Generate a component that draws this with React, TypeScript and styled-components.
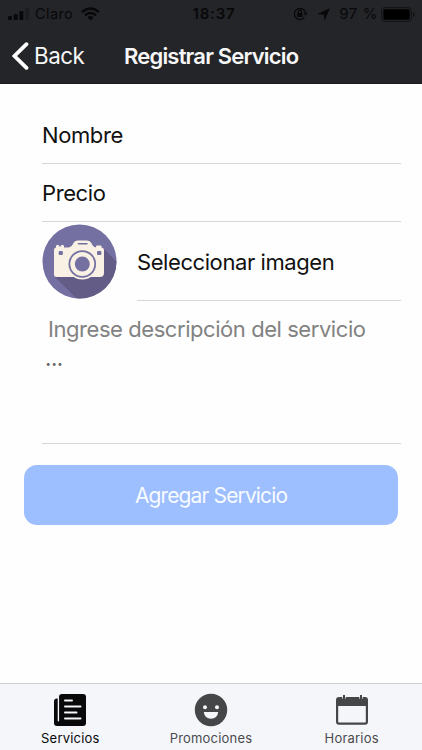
import React from 'react';
import styled, { createGlobalStyle } from 'styled-components';

const GlobalStyle = createGlobalStyle`
  * { box-sizing: border-box; }
  body { margin: 0; background: #fff; font-family: Inter, "Liberation Sans", sans-serif; }
  svg { display: block; flex: none; }
`;

const Screen = styled.div`
  width: 422px;
  height: 750px;
  display: flex;
  flex-direction: column;
  background: #fefefe;
  overflow: hidden;
`;

const Header = styled.header`
  height: 84px;
  flex: none;
  background: #242528;
  border-bottom: 1px solid #1a1a1d;
`;

const StatusBar = styled.div`
  height: 28px;
  display: grid;
  grid-template-columns: 1fr auto 1fr;
  align-items: center;
  padding: 0 7px 0 8px;
  color: #08080a;
  font-size: 14.5px;
  line-height: 28px;
`;

const StatusGroup = styled.div<{ $end?: boolean }>`
  display: flex;
  align-items: center;
  justify-content: ${(p) => (p.$end ? 'flex-end' : 'flex-start')};
`;

const Carrier = styled.span`
  margin: 0 8px 0 5px;
  letter-spacing: 0.4px;
`;

const Clock = styled.span`
  font-weight: 600;
  font-size: 15px;
  letter-spacing: 0.8px;
  padding-left: 5px;
`;

const Percent = styled.span`
  margin: 0 3px 0 9px;
  font-size: 15px;
  letter-spacing: 0.6px;
  white-space: nowrap;
`;

const StatusIcons = styled.div`
  display: flex;
  align-items: center;
  gap: 9px;
`;

const NavBar = styled.div`
  height: 55px;
  display: flex;
  align-items: center;
  padding-left: 12px;
  color: #f7f7f8;
`;

const BackButton = styled.button`
  display: flex;
  align-items: center;
  gap: 5px;
  width: 112px;
  padding: 0;
  border: 0;
  background: none;
  color: inherit;
  font: 400 22.4px/30px Inter, sans-serif;
  letter-spacing: -0.5px;
`;

const Title = styled.h1`
  margin: 0;
  font-size: 22px;
  line-height: 30px;
  font-weight: 600;
  letter-spacing: -0.81px;
  white-space: nowrap;
`;

const Form = styled.main`
  flex: 1;
  display: flex;
  flex-direction: column;
  padding: 22px 21px 0 42px;
`;

const Field = styled.div`
  height: 58px;
  flex: none;
  display: flex;
  align-items: center;
  border-bottom: 1px solid #d6d6d8;
  color: #111;
  font-size: 22px;
  letter-spacing: -0.4px;
`;

const ImageRow = styled.div`
  height: 79px;
  flex: none;
  display: flex;
  gap: 20px;
`;

const Avatar = styled.div`
  width: 75px;
  padding-top: 2px;
`;

const ImageLabel = styled.div`
  flex: 1;
  display: flex;
  align-items: center;
  border-bottom: 1px solid #d6d6d8;
  color: #111;
  font-size: 22px;
  letter-spacing: -0.42px;
  padding-top: 1px;
`;

const Description = styled.div`
  height: 143px;
  flex: none;
  border-bottom: 1px solid #d6d6d8;
  padding: 13px 0 0 6px;
  color: #828282;
  font-size: 22px;
  line-height: 30px;
  letter-spacing: -0.44px;
`;

const Ellipsis = styled.div`
  margin: -1px 0 0 -3px;
  color: #666;
`;

const Submit = styled.button`
  width: 374px;
  height: 60px;
  flex: none;
  margin: 21px 0 0 -18px;
  padding: 2px 0 0;
  border: 0;
  border-radius: 13px;
  background: #9dbeff;
  color: #f8fbff;
  font: 400 21px/30px Inter, sans-serif;
  letter-spacing: -0.87px;
`;

const TabBar = styled.nav`
  height: 67px;
  flex: none;
  display: grid;
  grid-template-columns: repeat(3, 1fr);
  border-top: 1px solid #cfcfd2;
  background: #f5f6fa;
`;

const Tab = styled.div<{ $active?: boolean }>`
  display: flex;
  flex-direction: column;
  align-items: center;
  padding-top: 9px;
  color: ${(p) => (p.$active ? '#09090a' : '#4a4b4d')};
  font-size: 13px;
  line-height: 18px;
  letter-spacing: 0.2px;
`;

const TabLabel = styled.span`
  margin-top: 2px;
`;

const Signal = () => (
  <svg width="22" height="14" viewBox="0 0 22 14" fill="#08080a">
    <rect x="0" y="9" width="4" height="4" rx="1" />
    <rect x="5.7" y="7" width="4" height="6" rx="1" />
    <rect x="11.4" y="4" width="4" height="9" rx="1" />
    <rect x="17.2" y="1" width="4" height="12" rx="1" opacity="0.25" />
  </svg>
);

const Wifi = () => (
  <svg width="19" height="14" viewBox="0 0 19 14" fill="none" stroke="#08080a" strokeWidth="2.4">
    <path d="M1 5.1Q9.5-2.3 18 5.1M4 8.4Q9.5 3.6 15 8.4" />
    <path d="M6.4 10.4Q9.5 7.8 12.6 10.4L9.5 13.6Z" fill="#08080a" stroke="none" />
  </svg>
);

const RotationLock = () => (
  <svg width="15" height="14" viewBox="0 0 15 14" fill="none" stroke="#08080a" strokeWidth="1.2">
    <path d="M11.4 10.4A5.6 5.6 0 1 1 12.4 5.5" />
    <path d="M10.4 5.8h4.2l-2 3Z" fill="#08080a" stroke="none" />
    <rect x="4.1" y="6" width="5.4" height="4" rx=".5" fill="#08080a" stroke="none" />
    <path d="M5.2 6V4.8a1.6 1.6 0 0 1 3.2 0V6" />
  </svg>
);

const LocationArrow = () => (
  <svg width="13" height="13" viewBox="0 0 13 13" fill="#08080a">
    <path d="M12.8.2 7.6 12.8 6.8 6.7.2 6Z" />
  </svg>
);

const Battery = () => (
  <svg width="34" height="15" viewBox="0 0 34 15">
    <rect x=".6" y=".6" width="29.8" height="13.8" rx="3" fill="none" stroke="#111214" strokeWidth="1" />
    <rect x="2.3" y="2.3" width="26.4" height="10.4" rx="1.5" fill="#000" />
    <path d="M32 5q1.7.6 1.7 2.5T32 10Z" fill="#111214" />
  </svg>
);

const Chevron = () => (
  <svg width="17" height="28" viewBox="0 0 17 28" fill="none" stroke="#fff" strokeWidth="3.8" strokeLinecap="round">
    <path d="M14.5 2.2 2.5 14l12 11.8" />
  </svg>
);

const Camera = () => (
  <svg width="75" height="75" viewBox="0 0 75 75">
    <defs>
      <clipPath id="disc">
        <circle cx="37.5" cy="37.5" r="37" />
      </clipPath>
    </defs>
    <circle cx="37.5" cy="37.5" r="37" fill="#7570a2" />
    <path d="M12.5 52.5 61 24l30 30v60H74Z" fill="#625c87" clipPath="url(#disc)" />
    <path
      d="M14 23.5v-1.2q0-1.2 1.2-1.2h5.6q1.2 0 1.2 1.2v1.2h5q3-1 4.5-4.3 1.2-2.7 4.5-2.7h9q3.2 0 4.5 2.8 1.5 3.7 4.5 4.2v-.9q0-1 1-1h3.5q1 0 1 1v.9q2.5.2 2.5 2.5V49q0 4-4 4H14.5Q12 53 12 50.5V26q0-2.5 2-2.5Z"
      fill="#f8f1e4"
    />
    <path d="M36.5 19.8h8.5" stroke="#7570a2" strokeWidth="1.6" strokeLinecap="round" />
    <path d="M16.2 20.6 18 23l1.8-2.4Z" fill="#7570a2" />
    <rect x="16.7" y="27" width="4.2" height="4" rx="1" fill="#7570a2" />
    <rect x="55" y="27" width="4.4" height="4" rx="1" fill="#7570a2" />
    <circle cx="40.3" cy="40" r="15.4" fill="#f8f1e4" />
    <circle cx="40.3" cy="40" r="13.8" fill="#7570a2" />
    <circle cx="40.3" cy="40" r="12" fill="#f8f1e4" />
    <circle cx="40.3" cy="40" r="7.5" fill="#7570a2" />
  </svg>
);

const NewsIcon = () => (
  <svg width="34" height="34" viewBox="0 0 34 34">
    <rect x="1" y="5.5" width="20" height="27.5" rx="3" fill="#09090a" />
    <rect x="6" y="1" width="27" height="32" rx="3" fill="#09090a" />
    <path d="M5.4 5v22.8" stroke="#f5f6fa" strokeWidth="1.4" strokeLinecap="round" />
    <path d="M12 7.5h7M12 13.5h15.5M12 19.5h11.5M12 25.5h15.5" stroke="#f5f6fa" strokeWidth="2" strokeLinecap="round" />
  </svg>
);

const SmileIcon = () => (
  <svg width="34" height="34" viewBox="0 0 34 34">
    <circle cx="17" cy="17" r="16.2" fill="#454648" />
    <circle cx="11" cy="14.2" r="2" fill="#f5f6fa" />
    <circle cx="23" cy="14.2" r="2" fill="#f5f6fa" />
    <path d="M9.8 19h14.4q-.8 6.7-7.2 6.7T9.8 19Z" fill="#f5f6fa" />
  </svg>
);

const CalendarIcon = () => (
  <svg width="34" height="34" viewBox="0 0 34 34">
    <rect x="1" y="4" width="32" height="27.8" rx="3" fill="#454648" />
    <path d="M3.2 13h27.6v15.4q0 1.2-1.2 1.2H4.4q-1.2 0-1.2-1.2Z" fill="#f5f6fa" />
    <path d="M7.3 4h3.4v1.8H7.3ZM24.3 4h3.4v1.8h-3.4Z" fill="#f5f6fa" />
    <path d="M8 2h2v5H8ZM25 2h2v5h-2Z" fill="#454648" />
  </svg>
);

export default function App() {
  return (
    <>
      <GlobalStyle />
      <Screen>
        <Header>
          <StatusBar>
            <StatusGroup>
              <Signal />
              <Carrier>Claro</Carrier>
              <Wifi />
            </StatusGroup>
            <Clock>18:37</Clock>
            <StatusGroup $end>
              <StatusIcons>
                <RotationLock />
                <LocationArrow />
              </StatusIcons>
              <Percent>97 %</Percent>
              <Battery />
            </StatusGroup>
          </StatusBar>
          <NavBar>
            <BackButton><Chevron />Back</BackButton>
            <Title>Registrar Servicio</Title>
          </NavBar>
        </Header>
        <Form>
          <Field>Nombre</Field>
          <Field>Precio</Field>
          <ImageRow>
            <Avatar><Camera /></Avatar>
            <ImageLabel>Seleccionar imagen</ImageLabel>
          </ImageRow>
          <Description>
            Ingrese descripción del servicio
            <Ellipsis>...</Ellipsis>
          </Description>
          <Submit>Agregar Servicio</Submit>
        </Form>
        <TabBar>
          <Tab $active><NewsIcon /><TabLabel>Servicios</TabLabel></Tab>
          <Tab><SmileIcon /><TabLabel>Promociones</TabLabel></Tab>
          <Tab><CalendarIcon /><TabLabel>Horarios</TabLabel></Tab>
        </TabBar>
      </Screen>
    </>
  );
}
